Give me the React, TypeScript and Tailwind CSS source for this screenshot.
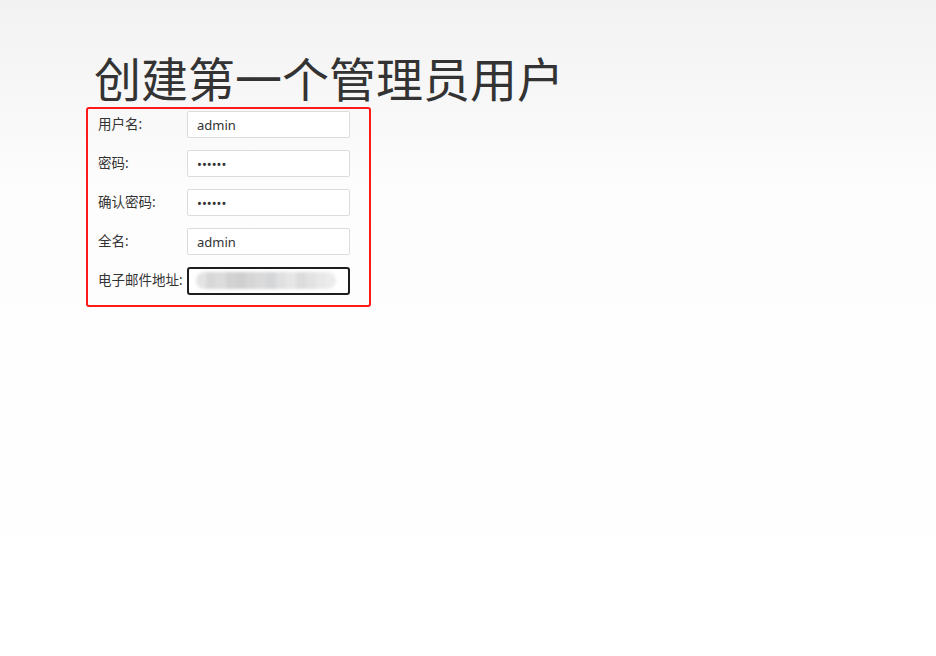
import React from "react";

const rows = [
  { label: "用户名:", type: "text", value: "admin" },
  { label: "密码:", type: "password", value: "123456" },
  { label: "确认密码:", type: "password", value: "123456" },
  { label: "全名:", type: "text", value: "admin" },
];

const blurBlocks = [
  "#e4e4e4", "#d8d8d8", "#dcdcdc", "#d2d2d2", "#cfcfcf", "#d6d6d6", "#dadada", "#d4d6d8", "#e0e0e0", "#e6e6e6", "#dcdcdc", "#e2e2e2", "#e8e8e8", "#ececec",
];

export default function App() {
  return (
    <div
      className="min-h-screen w-full bg-gradient-to-b from-[#f2f2f2] via-[#fdfdfd] via-30% to-white pl-[86px] pt-[53px]"
      style={{ fontFamily: '"Noto Sans", "Noto Sans CJK SC", sans-serif' }}
    >
      <h1 className="ml-[8px] text-[47px] leading-[52px] font-normal text-[#333]">
        创建第一个管理员用户
      </h1>
      <div className="mt-[2px] w-[285px] h-[200px] border-2 border-[#ff1a1a] rounded-[3px] pt-[2px] pl-[10px]">
        <div className="flex flex-col gap-[12px]">
          {rows.map((r) => (
            <div key={r.label} className="flex items-center h-[27px]">
              <span className="w-[89px] text-[13.5px] text-[#333]">{r.label}</span>
              <input
                readOnly
                type={r.type}
                value={r.value}
                className="w-[163px] h-[27px] border border-[#dcdcdc] bg-white rounded-[2px] pl-[9px] text-[13px] text-[#333] outline-none"
              />
            </div>
          ))}
          <div className="flex items-center h-[27px]">
            <span className="w-[89px] text-[13.5px] text-[#333] whitespace-nowrap">电子邮件地址:</span>
            <div className="w-[163px] h-[28px] border-2 border-[#1e1e1e] bg-white rounded-[3px] flex items-center pl-[7px]">
              <div className="flex h-[17px] blur-[1.5px] rounded-full overflow-hidden">
                {blurBlocks.map((c, i) => (
                  <div key={i} className="w-[10px] h-full" style={{ backgroundColor: c }} />
                ))}
              </div>
            </div>
          </div>
        </div>
      </div>
    </div>
  );
}
